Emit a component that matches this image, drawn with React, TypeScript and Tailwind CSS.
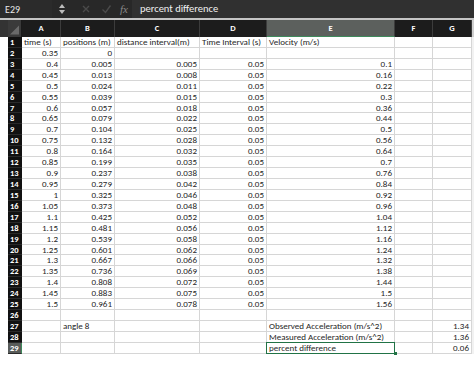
import React from "react";

const A = ["0.35","0.4","0.45","0.5","0.55","0.6","0.65","0.7","0.75","0.8","0.85","0.9","0.95","1","1.05","1.1","1.15","1.2","1.25","1.3","1.35","1.4","1.45","1.5"];
const B = ["0","0.005","0.013","0.024","0.039","0.057","0.079","0.104","0.132","0.164","0.199","0.237","0.279","0.325","0.373","0.425","0.481","0.539","0.601","0.667","0.736","0.808","0.883","0.961"];
const C = ["","0.005","0.008","0.011","0.015","0.018","0.022","0.025","0.028","0.032","0.035","0.038","0.042","0.046","0.048","0.052","0.056","0.058","0.062","0.066","0.069","0.072","0.075","0.078"];
const E = ["","0.1","0.16","0.22","0.3","0.36","0.44","0.5","0.56","0.64","0.7","0.76","0.84","0.92","0.96","1.04","1.12","1.16","1.24","1.32","1.38","1.44","1.5","1.56"];

type Row = { a?: string; b?: string; c?: string; d?: string; e?: string; f?: string; g?: string; left?: boolean };

const rows: Row[] = [
  { a: "time (s)", b: "positions (m)", c: "distance interval(m)", d: "Time Interval (s)", e: "Velocity (m/s)", left: true },
  ...A.map((a, i) => ({ a, b: B[i], c: C[i], d: i === 0 ? "" : "0.05", e: E[i] })),
  {},
  { b: "angle 8", e: "Observed Acceleration (m/s^2)", g: "1.34" },
  { e: "Measured Acceleration (m/s^2)", g: "1.36" },
  { e: "percent difference", g: "0.06" },
];

const cols = ["A", "B", "C", "D", "E", "F", "G"];

const Cell = ({ v, right }: { v?: string; right?: boolean }) => (
  <div
    className={`h-full border-r border-b border-[#d6d6d6] whitespace-nowrap leading-[10px] px-[2px] ${
      right ? "text-right" : "text-left"
    }`}
  >
    {v}
  </div>
);

const App = () => {
  return (
    <div
      className="w-[474px] h-[380px] bg-white overflow-hidden text-[#1e1e1e]"
      style={{ fontFamily: "Carlito, Lato, 'Open Sans', sans-serif" }}
    >
      {/* formula bar */}
      <div className="flex h-[18px] bg-[#282828] items-center">
        <div className="w-[52px] h-full flex items-center pl-[5px] text-[10px] text-[#e8e8e8] bg-[#2b2b2b]">
          E29
        </div>
        <svg width="8" height="12" viewBox="0 0 8 12" className="ml-[6px]">
          <path d="M4 1 L7 5 H1 Z" fill="#bbbbbb" />
          <path d="M4 11 L7 7 H1 Z" fill="#bbbbbb" />
        </svg>
        <svg width="10" height="10" viewBox="0 0 10 10" className="ml-[15px]">
          <path d="M2 2 L8 8 M8 2 L2 8" stroke="#4a4a4a" strokeWidth="1.4" />
        </svg>
        <svg width="11" height="10" viewBox="0 0 11 10" className="ml-[10px]">
          <path d="M1.5 5.5 L4.5 8.5 L9.5 1.5" stroke="#4a4a4a" strokeWidth="1.4" fill="none" />
        </svg>
        <span
          className="ml-[8px] text-[11px] italic text-[#8a8a8a]"
          style={{ fontFamily: "'Liberation Serif', serif" }}
        >
          fx
        </span>
        <div className="ml-[4px] flex-1 h-full bg-[#303030] flex items-center pl-[8px] text-[10.5px] text-[#f0f0f0]">
          percent difference
        </div>
      </div>
      <div className="h-[2px] bg-[#c4c4c4]" />

      {/* sheet */}
      <div className="grid grid-cols-[8px_14px_39px_54px_85px_67px_128px_38px_39px_2px] text-[9px]">
        {/* header row */}
        <div className="h-[17px] bg-[#333333]" />
        <div className="h-[17px] bg-[#3a3a3a] flex items-end justify-end p-[2px] border-r border-[#1a1a1a]">
          <svg width="10" height="10" viewBox="0 0 10 10">
            <path d="M10 0 V10 H0 Z" fill="#6a6a6a" />
          </svg>
        </div>
        {cols.map((c) => (
          <div
            key={c}
            className={`h-[17px] flex items-center justify-center font-bold text-[8.5px] text-white border-r border-[#3c3c3c] ${
              c === "E" ? "bg-[#5c605d] border-b border-b-[#3f8a5c]" : "bg-[#1c1c1c]"
            }`}
          >
            {c}
          </div>
        ))}
        <div className="h-[17px] bg-[#cfcfcf]" />

        {rows.map((r, i) => {
          const n = i + 1;
          const sel = n === 29;
          const al = !r.left;
          return (
            <React.Fragment key={n}>
              <div className="h-[10.93px]" />
              <div
                className={`h-[10.93px] font-bold text-[8.5px] text-white leading-[10px] pl-[2px] border-b border-[#2a2a2a] ${
                  sel ? "bg-[#595c5a] border-r border-r-[#3f8a5c]" : "bg-[#111111]"
                }`}
              >
                {n}
              </div>
              <div className="h-[10.93px]"><Cell v={r.a} right={al} /></div>
              <div className="h-[10.93px]"><Cell v={r.b} right={al && n !== 27} /></div>
              <div className="h-[10.93px]"><Cell v={r.c} right={al} /></div>
              <div className="h-[10.93px]"><Cell v={r.d} right={al} /></div>
              <div className="h-[10.93px] relative">
                <Cell v={r.e} right={al && n < 27} />
                {sel && (
                  <div className="absolute -left-[1px] -top-[1px] w-[129px] h-[12px] border-[1.5px] border-[#217346]">
                    <div className="absolute -right-[2.5px] -bottom-[2.5px] w-[3px] h-[3px] bg-[#217346]" />
                  </div>
                )}
              </div>
              <div className="h-[10.93px]"><Cell v={r.f} right /></div>
              <div className="h-[10.93px]"><Cell v={r.g} right /></div>
              <div className="h-[10.93px] bg-[#f2f2f2]" />
            </React.Fragment>
          );
        })}
      </div>
    </div>
  );
};

export default App;
